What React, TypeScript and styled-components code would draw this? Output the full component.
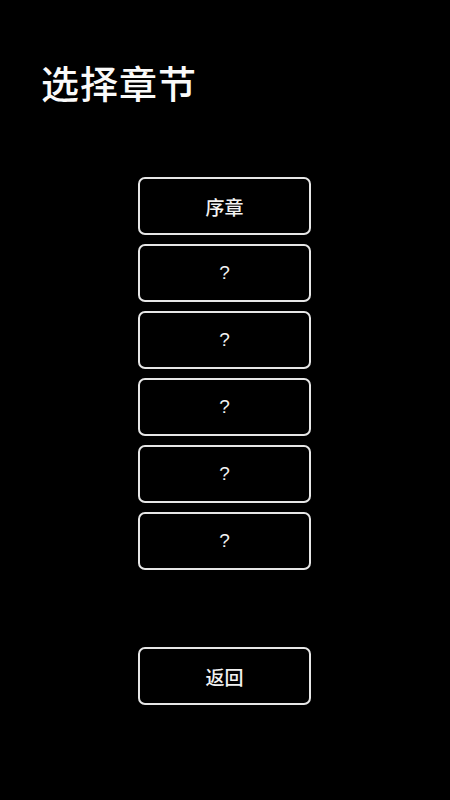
import React from "react";
import styled, { createGlobalStyle } from "styled-components";

const GlobalStyle = createGlobalStyle`
  html, body {
    margin: 0;
    padding: 0;
    background: #000;
  }
  body {
    font-family: "Noto Sans CJK SC", "Noto Sans", sans-serif;
  }
`;

const Screen = styled.div`
  width: 450px;
  height: 800px;
  background: #000;
  color: #fff;
  display: flex;
  flex-direction: column;
  box-sizing: border-box;
  padding: 56px 0 0 41px;
`;

const Title = styled.h1`
  margin: 0;
  font-size: 38px;
  font-weight: 500;
  line-height: 52px;
  letter-spacing: 1px;
  color: #fafafa;
`;

const ChapterList = styled.div`
  display: flex;
  flex-direction: column;
  gap: 9px;
  margin: 69px 0 0 97px;
`;

const ChapterButton = styled.button<{ $locked?: boolean }>`
  width: 173px;
  height: 58px;
  box-sizing: border-box;
  background: #000;
  border: 2px solid #e6e6e6;
  border-radius: 7px;
  color: #f2f2f2;
  font-family: ${({ $locked }) =>
    $locked ? '"Liberation Sans", sans-serif' : '"Noto Sans CJK SC", sans-serif'};
  font-size: ${({ $locked }) => ($locked ? "19px" : "19px")};
  font-weight: 500;
  display: flex;
  align-items: center;
  justify-content: center;
  padding: 0;
  cursor: pointer;
`;

const BackButton = styled(ChapterButton)`
  margin: 77px 0 0 97px;
`;

const chapters = ["序章", "?", "?", "?", "?", "?"];

export default function App() {
  return (
    <>
      <GlobalStyle />
      <Screen>
        <Title>选择章节</Title>
        <ChapterList>
          {chapters.map((c, i) => (
            <ChapterButton key={i} $locked={c === "?"}>
              {c}
            </ChapterButton>
          ))}
        </ChapterList>
        <BackButton>返回</BackButton>
      </Screen>
    </>
  );
}
